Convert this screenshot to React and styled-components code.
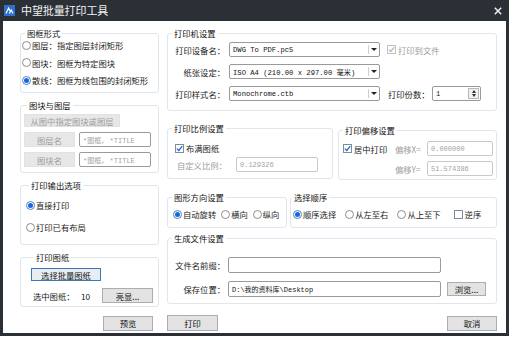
import React from 'react';
import styled, { createGlobalStyle } from 'styled-components';

const GlobalStyle = createGlobalStyle`
  html, body {
    margin: 0;
    padding: 0;
    background: #fff;
  }
  body {
    font-family: "Noto Sans CJK SC", "Noto Sans", sans-serif;
  }
`;

const Window = styled.div`
  width: 509px;
  height: 336px;
  box-sizing: border-box;
  background: #fff;
  border: 3px solid #2b3036;
  border-top: none;
  display: flex;
  flex-direction: column;
  font-size: 8.3px;
  color: #1b1b1b;
`;

const TitleBar = styled.div`
  height: 21px;
  flex-shrink: 0;
  background: #2b3036;
  display: flex;
  align-items: center;
  padding: 0 4px 0 1px;
`;

const TitleText = styled.span`
  margin-left: 6px;
  font-size: 11px;
  line-height: 21px;
  color: #f2f2f2;
  letter-spacing: -0.1px;
`;

const CloseBtn = styled.span`
  margin-left: auto;
  display: flex;
  align-items: center;
`;

const Body = styled.div`
  flex: 1;
  display: flex;
  flex-direction: column;
  padding: 6px 9px 0 17px;
`;

const Columns = styled.div`
  display: flex;
  gap: 8px;
`;

const Column = styled.div`
  width: ${p => p.$w}px;
  display: flex;
  flex-direction: column;
`;

const Pair = styled.div`
  display: flex;
  gap: ${p => p.$gap}px;
  margin-top: ${p => p.$mt || 0}px;
  align-items: flex-start;
`;

const Group = styled.fieldset`
  margin: ${p => p.$mt || 0}px 0 0 0;
  padding: ${p => p.$pad || '0'};
  border: 1px solid #e0e6ed;
  border-radius: 3px;
  height: ${p => p.$h}px;
  width: ${p => (p.$w ? `${p.$w}px` : 'auto')};
  box-sizing: border-box;
  min-width: 0;
  display: flex;
  flex-direction: column;
`;

const Legend = styled.legend`
  padding: 0 2px;
  margin-left: ${p => (p.$ml === undefined ? 3 : p.$ml)}px;
  line-height: 12px;
  font-size: 8.3px;
  color: #111;
`;

const Row = styled.div`
  display: flex;
  align-items: center;
  height: ${p => p.$h || 12}px;
  margin-top: ${p => p.$mt || 0}px;
  padding-left: ${p => p.$pl || 0}px;
  gap: ${p => p.$gap || 0}px;
  white-space: nowrap;
`;

const Option = styled.span`
  display: inline-flex;
  align-items: center;
  gap: 1px;
  margin-left: ${p => p.$ml || 0}px;
  color: ${p => (p.$muted ? '#a0a0a0' : 'inherit')};
  width: ${p => (p.$w ? `${p.$w}px` : 'auto')};
  flex-shrink: 0;
`;

const RadioDot = styled.span`
  width: 9px;
  height: 9px;
  box-sizing: border-box;
  border-radius: 50%;
  border: 1px solid ${p => (p.$on ? '#4a84cc' : '#8c8c8c')};
  background: #fff;
  display: inline-flex;
  align-items: center;
  justify-content: center;
  flex-shrink: 0;
  &::after {
    content: '';
    width: 5px;
    height: 5px;
    border-radius: 50%;
    background: #1769d8;
    display: ${p => (p.$on ? 'block' : 'none')};
  }
`;

const CheckBox = styled.span`
  width: 9px;
  height: 9px;
  box-sizing: border-box;
  border: 1px solid ${p => (p.$disabled ? '#c2c2c2' : '#7f8c99')};
  background: #fff;
  display: inline-flex;
  align-items: center;
  justify-content: center;
  flex-shrink: 0;
  margin-right: 1px;
`;

const FieldLabel = styled.span`
  width: ${p => p.$w}px;
  flex-shrink: 0;
  text-align: ${p => p.$align || 'right'};
  color: ${p => (p.$muted ? '#a0a0a0' : 'inherit')};
`;

const Field = styled.div`
  width: ${p => p.$w}px;
  height: ${p => p.$h || 15}px;
  box-sizing: border-box;
  margin-left: ${p => p.$ml || 0}px;
  border: 1px solid ${p => (p.$disabled ? '#c9c9c9' : '#9a9a9a')};
  border-radius: 2px;
  background: #fff;
  display: flex;
  align-items: center;
  padding-left: 3px;
  font-family: "Liberation Mono", "Noto Sans CJK SC", monospace;
  font-size: 7px;
  color: ${p => (p.$disabled || p.$placeholder ? '#a3a3a3' : '#111')};
  flex-shrink: 0;
  overflow: hidden;
  white-space: nowrap;
`;

const Combo = styled.div`
  width: 151px;
  height: 15px;
  box-sizing: border-box;
  border: 1px solid #9a9a9a;
  border-radius: 2px;
  background: #fff;
  display: flex;
  align-items: center;
  flex-shrink: 0;
  font-family: "Liberation Mono", "Noto Sans CJK SC", monospace;
  font-size: 7.2px;
  color: #111;
`;

const ComboText = styled.span`
  flex: 1;
  padding-left: 3px;
  white-space: nowrap;
  overflow: hidden;
`;

const ComboArrow = styled.span`
  width: 10px;
  height: 9px;
  border-left: 1px solid #cfcfcf;
  display: flex;
  align-items: center;
  justify-content: center;
  &::after {
    content: '';
    border-left: 3px solid transparent;
    border-right: 3px solid transparent;
    border-top: 3px solid #222;
  }
`;

const Spin = styled.div`
  width: 49px;
  height: 15px;
  box-sizing: border-box;
  border: 1px solid #9a9a9a;
  border-radius: 2px;
  display: flex;
  align-items: stretch;
  font-family: "Liberation Mono", monospace;
  font-size: 7.2px;
`;

const SpinValue = styled.span`
  flex: 1;
  padding-left: 3px;
  display: flex;
  align-items: center;
`;

const SpinButtons = styled.span`
  width: 9px;
  margin: 1px;
  border: 1px solid #b8b8b8;
  background: #f0f0f0;
  display: flex;
  flex-direction: column;
  align-items: center;
  justify-content: space-around;
`;

const SpinArrow = styled.span`
  border-left: 2.5px solid transparent;
  border-right: 2.5px solid transparent;
  ${p => (p.$up ? 'border-bottom: 3px solid #333;' : 'border-top: 3px solid #333;')}
`;

const Button = styled.div`
  width: ${p => p.$w}px;
  height: ${p => p.$h || 15}px;
  box-sizing: border-box;
  margin-left: ${p => (p.$ml === 'auto' ? 'auto' : `${p.$ml || 0}px`)};
  margin-top: ${p => p.$mt || 0}px;
  background: ${p => (p.$focus ? '#e8edf3' : '#e3e3e3')};
  border: 1px solid ${p => (p.$focus ? '#3a78b8' : '#adadad')};
  display: flex;
  align-items: center;
  justify-content: center;
  color: #111;
  flex-shrink: 0;
  white-space: nowrap;
`;

const FlatButton = styled.div`
  width: ${p => p.$w}px;
  height: ${p => p.$h || 15}px;
  background: #e7e7e7;
  border: 1px solid #e2e2e2;
  box-sizing: border-box;
  display: flex;
  align-items: center;
  justify-content: center;
  color: #9d9d9d;
  flex-shrink: 0;
  white-space: nowrap;
`;

const Count = styled.span`
  margin-left: 7px;
`;

const Footer = styled.div`
  display: flex;
  align-items: center;
  margin-top: 8px;
  height: 16px;
`;

function Radio({ on, label, ml, w }) {
  return (
    <Option $ml={ml} $w={w}>
      <RadioDot $on={on} />
      {label}
    </Option>
  );
}

function Check({ on, label, disabled, ml, w }) {
  const tick = disabled ? '#b8b8b8' : '#1f6fd6';
  return (
    <Option $ml={ml} $w={w} $muted={disabled}>
      <CheckBox $disabled={disabled}>
        {on && (
          <svg width="7" height="7" viewBox="0 0 7 7">
            <path d="M0.8 3.6 L2.7 5.5 L6.3 1.2" fill="none" stroke={tick} strokeWidth="1.3" />
          </svg>
        )}
      </CheckBox>
      {label}
    </Option>
  );
}

function AppIcon() {
  return (
    <svg width="11" height="11" viewBox="0 0 11 11">
      <rect width="11" height="11" fill="#2f6fd0" />
      <path d="M2 8.5 L4.6 3 L6.2 6.2 M5.4 8.5 L7.2 5 L9 8.5" fill="none" stroke="#fff" strokeWidth="1.2" />
    </svg>
  );
}

function CloseIcon() {
  return (
    <svg width="8" height="8" viewBox="0 0 8 8">
      <path d="M0.8 0.8 L7.2 7.2 M7.2 0.8 L0.8 7.2" stroke="#f0f0f0" strokeWidth="1.5" />
    </svg>
  );
}

export default function App() {
  return (
    <>
      <GlobalStyle />
      <Window>
        <TitleBar>
          <AppIcon />
          <TitleText>中望批量打印工具</TitleText>
          <CloseBtn><CloseIcon /></CloseBtn>
        </TitleBar>

        <Body>
          <Columns>
            <Column $w={139}>
              <Group $h={66} $pad="0 0 0 1px">
                <Legend>图框形式</Legend>
                <Row><Radio label="图层：指定图层封闭矩形" /></Row>
                <Row $mt={5.5}><Radio label="图块：图框为特定图块" /></Row>
                <Row $mt={5.5}><Radio on label="散线：图框为线包围的封闭矩形" /></Row>
              </Group>

              <Group $mt={6} $h={74} $pad="3px 0 0 3px">
                <Legend>图块与图层</Legend>
                <FlatButton $w={96} $h={13}>从图中指定图块或图层</FlatButton>
                <Row $h={15} $mt={5}>
                  <FlatButton $w={51}>图层名</FlatButton>
                  <Field $w={72} $ml={4} $placeholder>*图框, *TITLE</Field>
                </Row>
                <Row $h={15} $mt={5}>
                  <FlatButton $w={51}>图块名</FlatButton>
                  <Field $w={72} $ml={4} $placeholder>*图框, *TITLE</Field>
                </Row>
              </Group>

              <Group $mt={6} $h={66} $pad="0 0 0 5px">
                <Legend>打印输出选项</Legend>
                <Row $mt={8}><Radio on label="直接打印" /></Row>
                <Row $mt={10}><Radio label="打印已有布局" /></Row>
              </Group>

              <Group $mt={6} $h={56} $pad="0 5px 0 10px">
                <Legend>打印图纸</Legend>
                <Button $w={70} $h={13} $mt={5} $focus>选择批量图纸</Button>
                <Row $h={15} $mt={7}>
                  <FieldLabel $w={41} $align="left" style={{ marginLeft: 2 }}>选中图纸：</FieldLabel>
                  <Count>10</Count>
                  <Button $w={51} $ml="auto">亮显...</Button>
                </Row>
              </Group>
            </Column>

            <Column $w={330}>
              <Group $h={84}>
                <Legend $ml={4}>打印机设置</Legend>
                <Row $h={15} $mt={3} $gap={4}>
                  <FieldLabel $w={57}>打印设备名：</FieldLabel>
                  <Combo><ComboText>DWG To PDF.pc5</ComboText><ComboArrow /></Combo>
                  <Check on disabled ml={3} label="打印到文件" />
                </Row>
                <Row $h={15} $mt={7} $gap={4}>
                  <FieldLabel $w={57}>纸张设定：</FieldLabel>
                  <Combo><ComboText>ISO A4 (210.00 x 297.00 毫米)</ComboText><ComboArrow /></Combo>
                </Row>
                <Row $h={15} $mt={7} $gap={4}>
                  <FieldLabel $w={57}>打印样式名：</FieldLabel>
                  <Combo><ComboText>Monochrome.ctb</ComboText><ComboArrow /></Combo>
                  <FieldLabel $w={40} $align="left" style={{ marginLeft: 4 }}>打印份数：</FieldLabel>
                  <Spin>
                    <SpinValue>1</SpinValue>
                    <SpinButtons><SpinArrow $up /><SpinArrow /></SpinButtons>
                  </Spin>
                </Row>
              </Group>

              <Pair $gap={5} $mt={11}>
                <Group $h={57} $w={166}>
                  <Legend $ml={4}>打印比例设置</Legend>
                  <Row $mt={8} $pl={7}><Check on label="布满图纸" /></Row>
                  <Row $h={15} $mt={3} $pl={9}>
                    <FieldLabel $w={52} $align="left" $muted>自定义比例：</FieldLabel>
                    <Field $w={82} $ml={7} $disabled>0.129326</Field>
                  </Row>
                </Group>
                <Group $h={56} $w={159} $mt={2}>
                  <Legend $ml={4}>打印偏移设置</Legend>
                  <Row $h={15} $mt={5} $pl={4}>
                    <Check on w={52} label="居中打印" />
                    <FieldLabel $w={30} $align="left" $muted>偏移X=</FieldLabel>
                    <Field $w={66} $ml={2} $disabled>0.000000</Field>
                  </Row>
                  <Row $h={15} $mt={5} $pl={56}>
                    <FieldLabel $w={30} $align="left" $muted>偏移Y=</FieldLabel>
                    <Field $w={66} $ml={2} $disabled>51.574386</Field>
                  </Row>
                </Group>
              </Pair>

              <Pair $gap={3} $mt={11}>
                <Group $h={37} $w={120}>
                  <Legend $ml={4}>图形方向设置</Legend>
                  <Row $mt={5} $pl={5} $gap={5}>
                    <Radio on label="自动旋转" />
                    <Radio label="横向" />
                    <Radio label="纵向" />
                  </Row>
                </Group>
                <Group $h={37} $w={207}>
                  <Legend $ml={1}>选择顺序</Legend>
                  <Row $mt={5} $pl={2} $gap={9}>
                    <Radio on label="顺序选择" />
                    <Radio label="从左至右" />
                    <Radio label="从上至下" />
                    <Check ml={4} label="逆序" />
                  </Row>
                </Group>
              </Pair>

              <Group $mt={4} $h={72}>
                <Legend $ml={4}>生成文件设置</Legend>
                <Row $h={16} $mt={13} $gap={3}>
                  <FieldLabel $w={57}>文件名前缀：</FieldLabel>
                  <Field $w={213} $h={16} />
                </Row>
                <Row $h={16} $mt={8} $gap={3}>
                  <FieldLabel $w={57}>保存位置：</FieldLabel>
                  <Field $w={213} $h={16}>D:\我的资料库\Desktop</Field>
                  <Button $w={39} $h={14} $ml={3}>浏览...</Button>
                </Row>
              </Group>
            </Column>
          </Columns>

          <Footer>
            <Button $w={50} $h={15} $ml={83}>预览</Button>
            <Button $w={51} $h={16} $ml={14}>打印</Button>
            <Button $w={50} $h={15} $ml="auto">取消</Button>
          </Footer>
        </Body>
      </Window>
    </>
  );
}
